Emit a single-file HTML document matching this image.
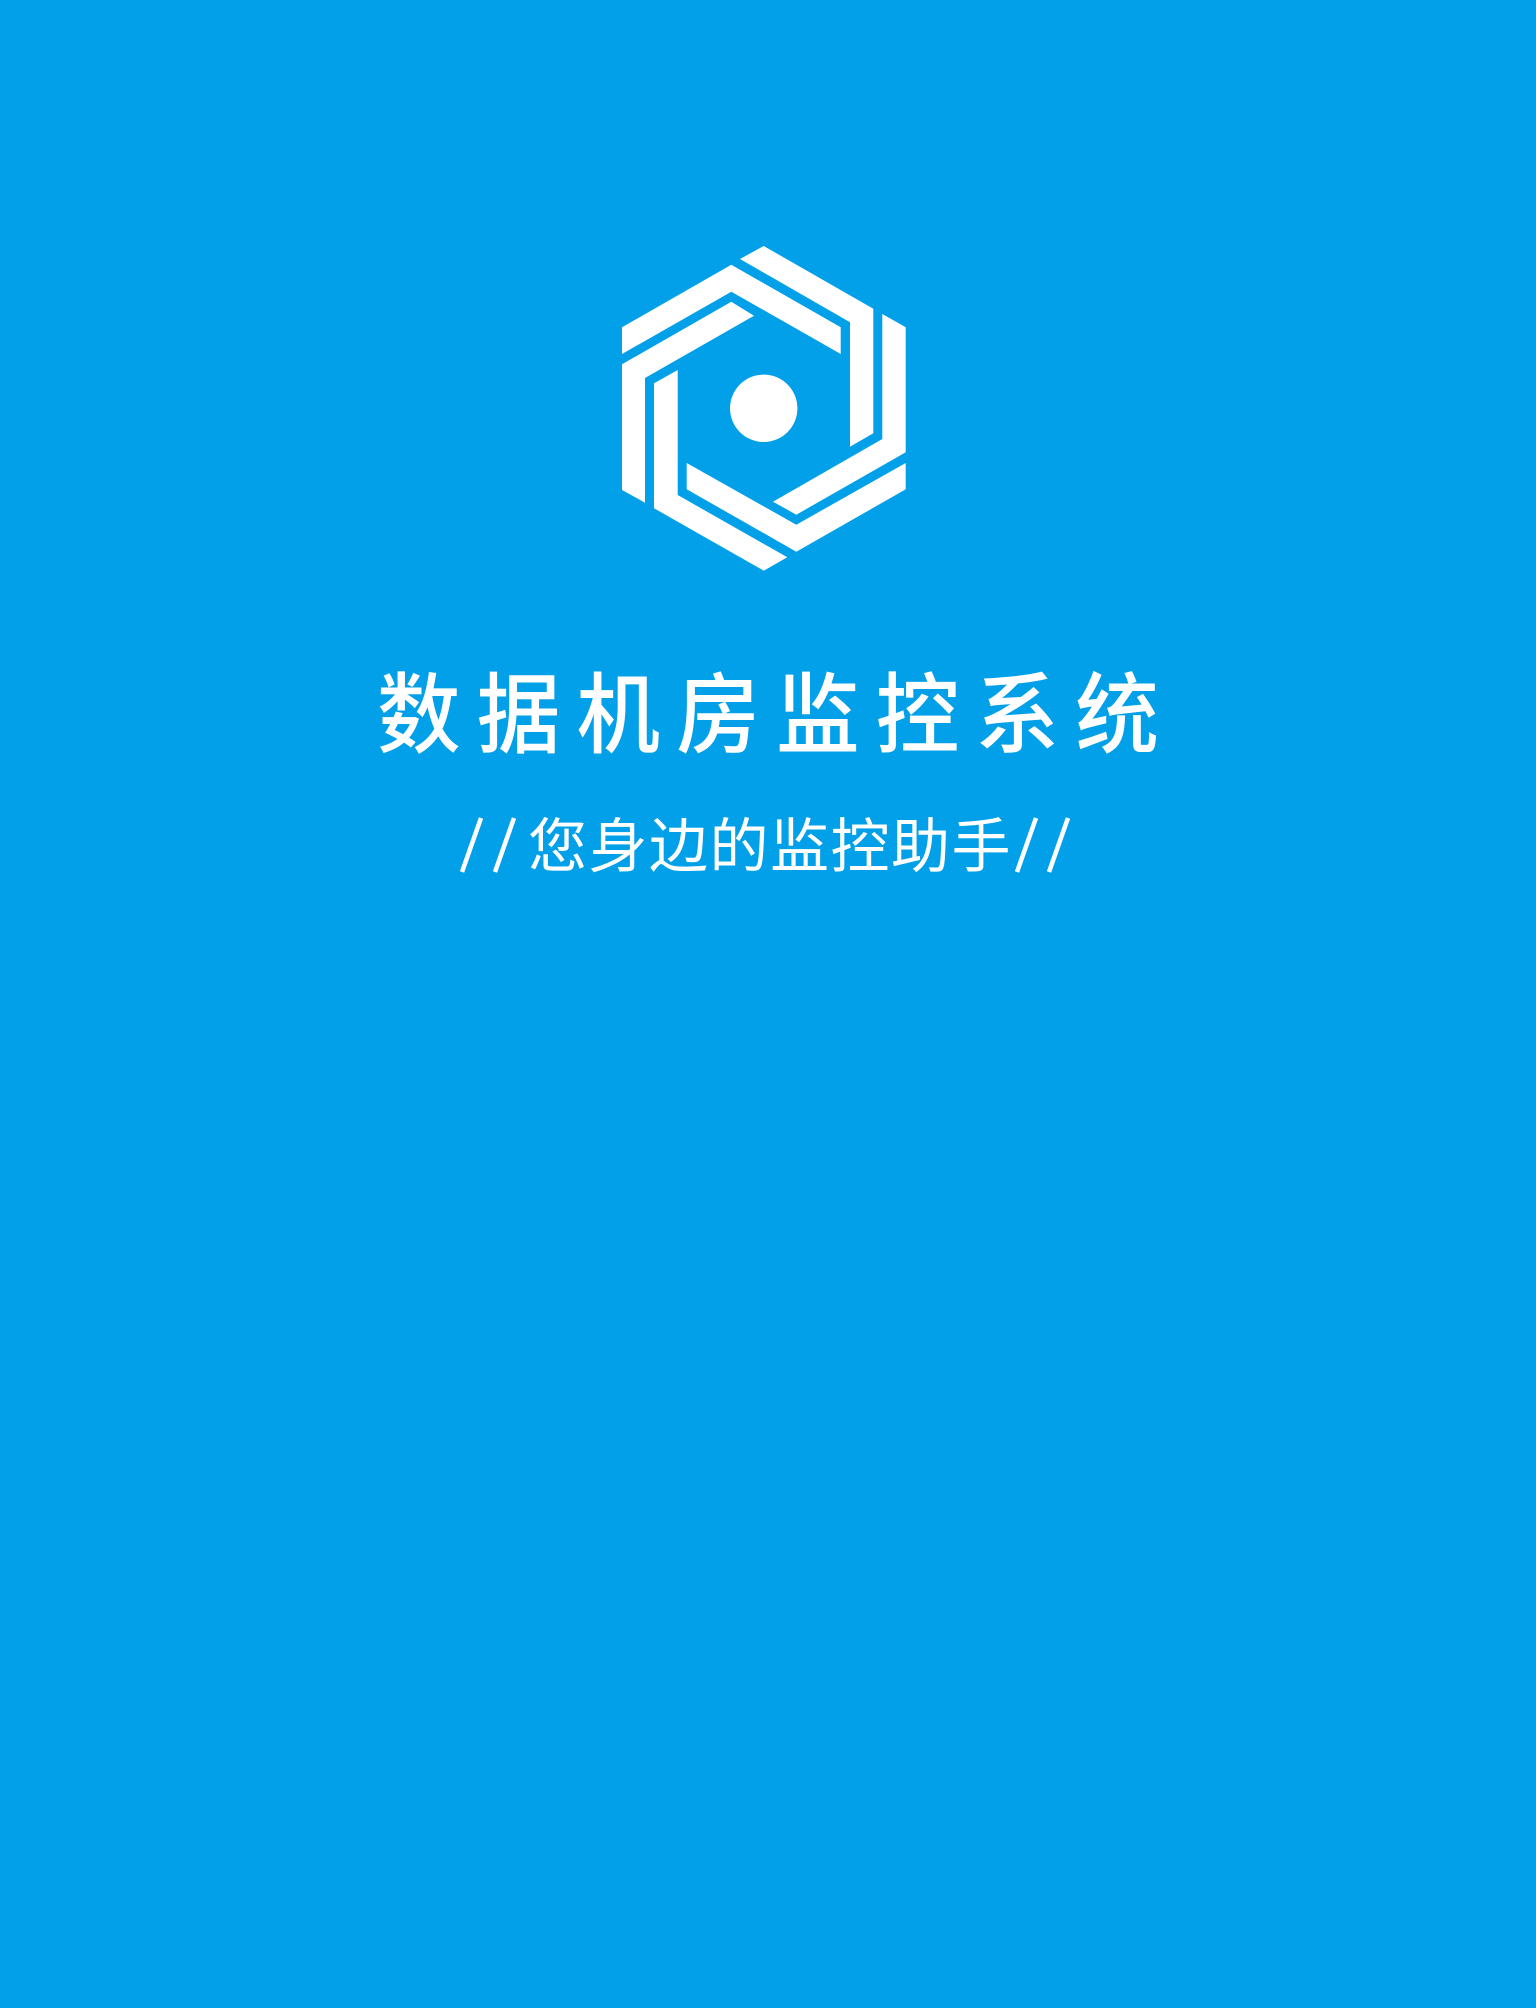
<!DOCTYPE html>
<html><head><meta charset="utf-8"><style>
html,body{margin:0;padding:0}
body{width:1536px;height:2008px;background:#02a0e8;position:relative;overflow:hidden;font-family:"Liberation Sans","Noto Sans CJK SC",sans-serif;color:#fff}
svg{position:absolute;left:0;top:0}
.t{position:absolute;left:0;width:1536px;text-align:center;white-space:nowrap}
.t span{display:inline-block;transform-origin:50% 50%}
#t1{top:666px;font-size:88px;line-height:100px;font-weight:500}
#t1 span{letter-spacing:17px;margin-right:-17px;transform:scaleX(0.95)}
#t2{position:absolute;left:528px;top:812px;font-size:59px;line-height:70px;font-weight:400;white-space:nowrap;letter-spacing:1.5px}
</style></head><body>
<svg width="1536" height="900" viewBox="0 0 1536 900" fill="#fff">
<polygon points="740,259 763.7,246 873.3,308.7 873.3,433.3 850,446.7 850,322.3"/>
<polygon points="622,327.3 731.3,264.7 840.7,327.3 840.7,354 731.3,291.7 622,354"/>
<polygon points="622,364.3 731.3,301.7 754,315.7 645,378 645,502.7 622,490"/>
<polygon points="654,383.3 677.7,370 677.7,495 787.3,557.3 763.7,570.7 654,508.3"/>
<polygon points="686.7,463 796.3,524.7 905.7,463 905.7,489.3 796.3,551.7 686.7,489.3"/>
<polygon points="882.3,314 905.7,327.3 905.7,452.3 796.3,514.7 773,501.7 882.3,439"/>
<circle cx="763.7" cy="408.3" r="33.7"/>
<g stroke="#fff" stroke-width="4.5">
<line x1="462" y1="872" x2="481" y2="818"/>
<line x1="495" y1="872" x2="514" y2="818"/>
<line x1="1017" y1="872" x2="1036" y2="818"/>
<line x1="1049" y1="872" x2="1068" y2="818"/>
</g>
</svg>
<div class="t" id="t1"><span>数据机房监控系统</span></div>
<div id="t2">您身边的监控助手</div>
</body></html>
